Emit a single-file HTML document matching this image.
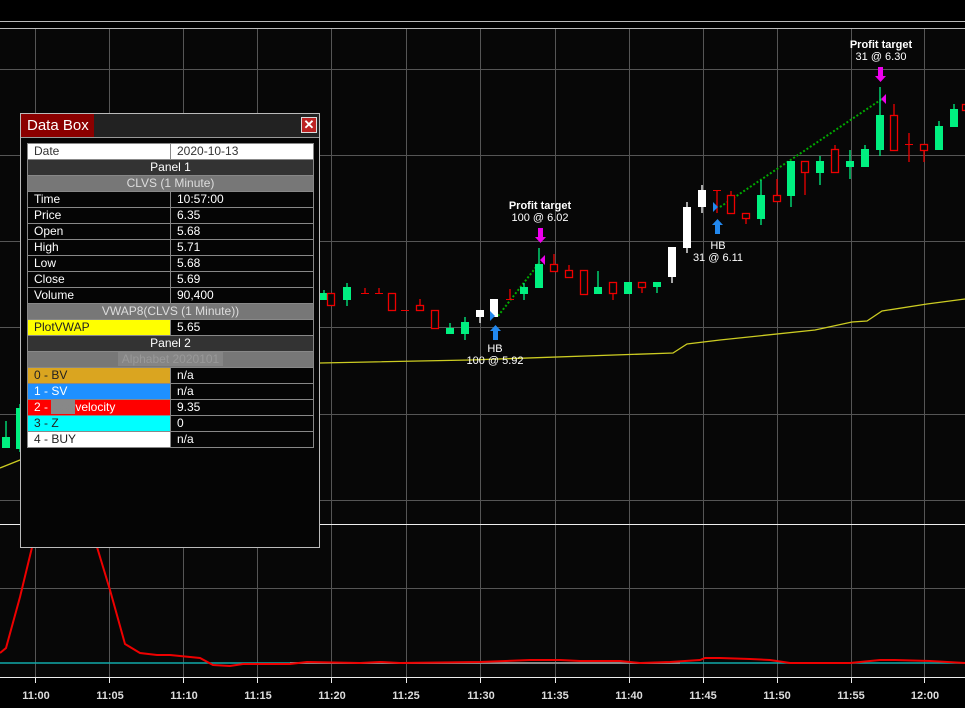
<!DOCTYPE html><html><head><meta charset="utf-8"><style>
body{margin:0;width:965px;height:708px;background:#000;overflow:hidden;position:relative;font-family:"Liberation Sans",sans-serif}
svg{position:absolute;left:0;top:0}
#db{position:absolute;left:20px;top:113px;width:298px;height:433px;border:1px solid #bbb;background:#050505}
#tb{position:absolute;left:0;top:0;width:298px;height:23px;background:#222;border-bottom:1px solid #999}
#tab{position:absolute;left:0;top:0;width:73px;height:23px;background:#8b0000;color:#fff;font-size:15px;line-height:23px;padding-left:6px;box-sizing:border-box}
#x{position:absolute;left:280px;top:3px;width:14px;height:14px;background:#b22;border:1px solid #ddd;color:#fff;font-size:13px;font-weight:bold;line-height:14px;text-align:center}
table{position:absolute;left:6px;top:29px;border-collapse:collapse;width:287px;font-size:12px;color:#fff}
td{border:1px solid #888;height:16px;padding:0 0 0 6px;line-height:15px;box-sizing:border-box}
td.l{width:143px}
.h{background:#333;text-align:center;padding:0}
.g{background:#777;text-align:center;padding:0;color:#ddd}
</style></head><body>
<svg width="965" height="708">
<rect x="0" y="29" width="965" height="648" fill="#070707"/>
<line x1="0" y1="21.5" x2="965" y2="21.5" stroke="#bbb"/>
<line x1="0" y1="28.5" x2="965" y2="28.5" stroke="#bbb"/>
<g stroke="#555">
<line x1="35.5" y1="29" x2="35.5" y2="677"/><line x1="109.5" y1="29" x2="109.5" y2="677"/><line x1="183.5" y1="29" x2="183.5" y2="677"/><line x1="257.5" y1="29" x2="257.5" y2="677"/><line x1="331.5" y1="29" x2="331.5" y2="677"/><line x1="406.5" y1="29" x2="406.5" y2="677"/><line x1="480.5" y1="29" x2="480.5" y2="677"/><line x1="555.5" y1="29" x2="555.5" y2="677"/><line x1="629.5" y1="29" x2="629.5" y2="677"/><line x1="703.5" y1="29" x2="703.5" y2="677"/><line x1="777.5" y1="29" x2="777.5" y2="677"/><line x1="851.5" y1="29" x2="851.5" y2="677"/><line x1="924.5" y1="29" x2="924.5" y2="677"/>
<line x1="0" y1="69.5" x2="965" y2="69.5"/><line x1="0" y1="155.5" x2="965" y2="155.5"/><line x1="0" y1="241.5" x2="965" y2="241.5"/><line x1="0" y1="327.5" x2="965" y2="327.5"/><line x1="0" y1="414.5" x2="965" y2="414.5"/><line x1="0" y1="500.5" x2="965" y2="500.5"/><line x1="0" y1="588.5" x2="965" y2="588.5"/>
</g>
<line x1="0" y1="524.5" x2="965" y2="524.5" stroke="#eee"/>
<line x1="0" y1="677.5" x2="965" y2="677.5" stroke="#eee"/>
<g stroke="#eee"><line x1="35.5" y1="677" x2="35.5" y2="683"/><line x1="109.5" y1="677" x2="109.5" y2="683"/><line x1="183.5" y1="677" x2="183.5" y2="683"/><line x1="257.5" y1="677" x2="257.5" y2="683"/><line x1="331.5" y1="677" x2="331.5" y2="683"/><line x1="406.5" y1="677" x2="406.5" y2="683"/><line x1="480.5" y1="677" x2="480.5" y2="683"/><line x1="555.5" y1="677" x2="555.5" y2="683"/><line x1="629.5" y1="677" x2="629.5" y2="683"/><line x1="703.5" y1="677" x2="703.5" y2="683"/><line x1="777.5" y1="677" x2="777.5" y2="683"/><line x1="851.5" y1="677" x2="851.5" y2="683"/><line x1="924.5" y1="677" x2="924.5" y2="683"/></g>
<g fill="#ddd" font-size="11" font-weight="bold" text-anchor="middle" font-family="Liberation Sans">
<text x="36" y="699">11:00</text><text x="110" y="699">11:05</text><text x="184" y="699">11:10</text><text x="258" y="699">11:15</text><text x="332" y="699">11:20</text><text x="406" y="699">11:25</text><text x="481" y="699">11:30</text><text x="555" y="699">11:35</text><text x="629" y="699">11:40</text><text x="703" y="699">11:45</text><text x="777" y="699">11:50</text><text x="851" y="699">11:55</text><text x="925" y="699">12:00</text>
</g>
<polyline fill="none" stroke="#cc2" stroke-width="1.3" points="0,468 20,460 320,363 470,360 673,353 687,344 720,340 815,330 852,322 867,321 882,311 927,304 965,299"/>
<line x1="0" y1="663" x2="965" y2="663" stroke="#1aa" stroke-width="1.5"/>
<polyline fill="none" stroke="#888" stroke-width="2" points="290,663 560,663 640,663 680,663"/>
<polyline fill="none" stroke="#e00" stroke-width="2" points="0,653 6,648 20,597 35,535 45,500 90,500 97,547 110,590 125,644 140,653 157,655 170,655 200,658 213,665 230,666 243,664 290,664 307,662 360,663 380,662 400,663 480,662 530,660 560,660 580,661 620,661 640,663 670,662 700,660 705,658 720,658 750,659 770,660 790,663 850,663 880,660 895,660 930,661 965,663"/>
<g stroke="#0a0" stroke-width="2" stroke-dasharray="2,2"><line x1="498" y1="316" x2="540" y2="262"/><line x1="720" y1="207" x2="882" y2="99"/></g>
<g id="c"></g>
<g fill="#fff" font-size="11" text-anchor="middle" font-family="Liberation Sans">
<text x="540" y="209" font-weight="bold">Profit target</text><text x="540" y="221">100 @ 6.02</text>
<text x="881" y="48" font-weight="bold">Profit target</text><text x="881" y="60">31 @ 6.30</text>
<text x="495" y="352">HB</text><text x="495" y="364">100 @ 5.92</text>
<text x="718" y="249">HB</text><text x="718" y="261">31 @ 6.11</text>
</g>
<g fill="#e0e"><path d="M538,228h5v9h3l-5.5,6l-5.5,-6h3z"/><path d="M878,67h5v9h3l-5.5,6l-5.5,-6h3z"/><path d="M545,255v10l-5,-5z"/><path d="M886,94v10l-5,-5z"/></g>
<g fill="#2288ee"><path d="M493,340h5v-9h3l-5.5,-6l-5.5,6h3z"/><path d="M715,234h5v-9h3l-5.5,-6l-5.5,6h3z"/><path d="M490,311v10l5,-5z"/><path d="M713,202v10l5,-5z"/></g>
</svg>
<div id="db"><div id="tb"><div id="tab">Data Box</div><div id="x">✕</div></div>
<table>
<tr><td class="l" style="background:#fff;color:#333">Date</td><td style="background:#fff;color:#333">2020-10-13</td></tr>
<tr><td colspan="2" class="h">Panel 1</td></tr>
<tr><td colspan="2" class="g">CLVS (1 Minute)</td></tr>
<tr><td class="l">Time</td><td>10:57:00</td></tr>
<tr><td class="l">Price</td><td>6.35</td></tr>
<tr><td class="l">Open</td><td>5.68</td></tr>
<tr><td class="l">High</td><td>5.71</td></tr>
<tr><td class="l">Low</td><td>5.68</td></tr>
<tr><td class="l">Close</td><td>5.69</td></tr>
<tr><td class="l">Volume</td><td>90,400</td></tr>
<tr><td colspan="2" class="g">VWAP8(CLVS (1 Minute))</td></tr>
<tr><td class="l" style="background:#ff0;color:#222">PlotVWAP</td><td>5.65</td></tr>
<tr><td colspan="2" class="h">Panel 2</td></tr>
<tr><td colspan="2" class="g"><span style="background:#858585;color:#999">&nbsp;Alphabet 2020101&nbsp;</span></td></tr>
<tr><td class="l" style="background:#daa520;color:#222">0 - BV</td><td>n/a</td></tr>
<tr><td class="l" style="background:#1e90ff">1 - SV</td><td>n/a</td></tr>
<tr><td class="l" style="background:#f00">2 - <span style="background:#888;color:#888">xxxx</span>velocity</td><td>9.35</td></tr>
<tr><td class="l" style="background:#0ff;color:#222">3 - Z</td><td>0</td></tr>
<tr><td class="l" style="background:#fff;color:#222">4 - BUY</td><td>n/a</td></tr>
</table></div>
<script>
var C=[
['g',2,437,448,421,448],['g',16,408,449,404,452],
['g',320,293,300,290,300],['r',327,293,305,293,305],['g',343,287,300,283,306],['r',361,293,293,288,293],['r',375,293,293,288,293],['r',388,293,310,293,310],['r',401,310,310,310,310],['r',416,305,310,299,310],['r',431,310,328,310,328],['g',446,328,334,323,334],['g',461,322,334,317,340],['w',476,310,317,310,323],['w',490,299,317,299,317],['r',506,299,299,289,299],['g',520,287,294,283,300],['g',535,264,288,248,288],['r',550,264,271,254,271],['r',565,270,277,265,277],['r',580,270,294,270,294],['g',594,287,294,271,294],['r',609,282,293,282,300],['g',624,282,294,282,294],['r',638,282,287,282,293],['g',653,282,287,282,293],['w',668,247,277,247,283],['w',683,207,248,202,253],['w',698,190,207,185,213],['r',713,190,190,190,213],['r',727,195,213,191,213],['r',742,213,218,213,224],['g',757,195,219,180,225],['r',773,195,201,179,201],['g',787,161,196,161,207],['r',801,161,172,161,195],['g',816,161,173,156,185],['r',831,149,172,145,172],['g',846,161,167,150,179],['g',861,149,167,145,167],['g',876,115,150,87,156],['r',890,115,150,104,150],['r',905,144,144,133,162],['r',920,144,150,144,162],['g',935,126,150,121,150],['g',950,109,127,104,127],['r',962,104,110,104,110]];
var s='';C.forEach(function(c){var x=c[1],w=8,m=x+w/2;var col=c[0]=='g'?'#00f080':c[0]=='w'?'#fff':'#e00';
s+='<line x1="'+m+'" y1="'+c[4]+'" x2="'+m+'" y2="'+c[5]+'" stroke="'+col+'" stroke-width="1.3"/>';
if(c[0]=='r'){ if(c[3]-c[2]<1) s+='<line x1="'+x+'" y1="'+(c[2]+.5)+'" x2="'+(x+w)+'" y2="'+(c[2]+.5)+'" stroke="#e00"/>'; else s+='<rect x="'+(x+.5)+'" y="'+(c[2]+.5)+'" width="'+(w-1)+'" height="'+(c[3]-c[2])+'" fill="#070707" stroke="#e00" stroke-width="1.3"/>';}
else s+='<rect x="'+x+'" y="'+c[2]+'" width="'+w+'" height="'+Math.max(c[3]-c[2],2)+'" fill="'+col+'"/>';});
document.getElementById('c').innerHTML=s;
</script>
</body></html>
